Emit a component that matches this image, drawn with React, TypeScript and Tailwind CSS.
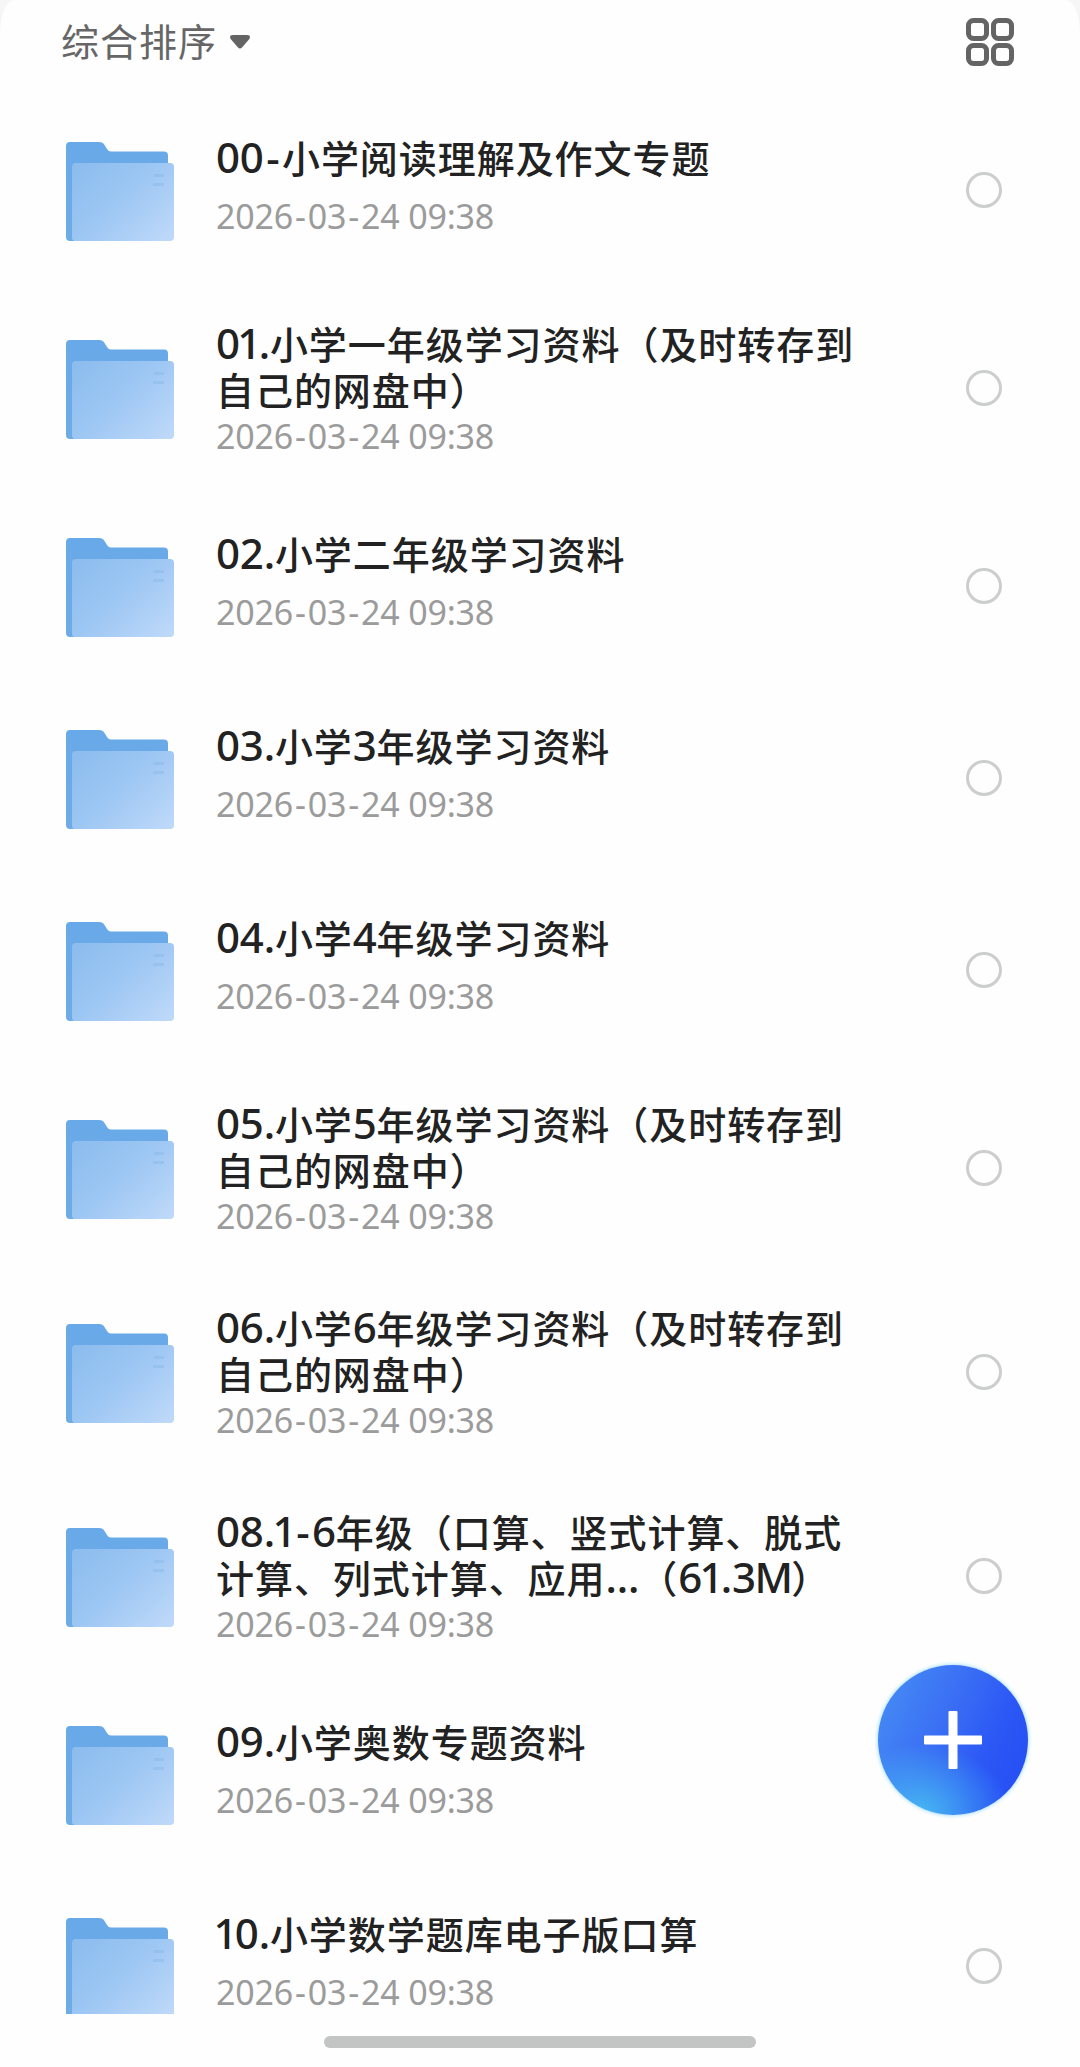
import clsx from 'clsx'

type FileItem = {
  lines: string[],
  date: string
}

const files: FileItem[] = [
  { lines: ['00-小学阅读理解及作文专题'], date: '2026-03-24 09:38' },
  { lines: ['01.小学一年级学习资料（及时转存到', '自己的网盘中）'], date: '2026-03-24 09:38' },
  { lines: ['02.小学二年级学习资料'], date: '2026-03-24 09:38' },
  { lines: ['03.小学3年级学习资料'], date: '2026-03-24 09:38' },
  { lines: ['04.小学4年级学习资料'], date: '2026-03-24 09:38' },
  { lines: ['05.小学5年级学习资料（及时转存到', '自己的网盘中）'], date: '2026-03-24 09:38' },
  { lines: ['06.小学6年级学习资料（及时转存到', '自己的网盘中）'], date: '2026-03-24 09:38' },
  { lines: ['08.1-6年级（口算、竖式计算、脱式', '计算、列式计算、应用...（61.3M）'], date: '2026-03-24 09:38' },
  { lines: ['09.小学奥数专题资料'], date: '2026-03-24 09:38' },
  { lines: ['10.小学数学题库电子版口算'], date: '2026-03-24 09:38' },
]

const FolderIcon = () => (
  <svg viewBox="0 0 108 100" className="mt-1 h-[100px] w-[108px] shrink-0">
    <defs>
      <linearGradient id="front" x1="0" y1="0.1" x2="1" y2="0.9">
        <stop offset="0" stopColor="#8cbdee" />
        <stop offset="0.45" stopColor="#9cc6f3" />
        <stop offset="1" stopColor="#bdd8f9" />
      </linearGradient>
      <linearGradient id="back" x1="0" y1="0" x2="0" y2="1">
        <stop offset="0" stopColor="#68a9e9" />
        <stop offset="1" stopColor="#6fabe4" />
      </linearGradient>
    </defs>
    <path d="M4 0H33Q37 0 38.500 3L41 7Q42.500 9.500 45 9.500H98Q102 9.500 102 13.500V60L8 99H4Q0 99 0 95V4Q0 0 4 0Z" fill="url(#back)" />
    <path d="M10 21H104Q108 21 108 25V95Q108 99 104 99H9Q6 99 6 95V25Q6 21 10 21Z" fill="url(#front)" />
    <path d="M88 33.500H98M87 42.500H98" stroke="#84b4e6" strokeOpacity="0.4" strokeWidth="3" />
  </svg>
)

const GridIcon = () => (
  <svg viewBox="0 0 48 48" className="size-12" fill="none" stroke="#646464" strokeWidth="5">
    <rect x="2.500" y="2.500" width="18" height="18" rx="5" />
    <rect x="27.500" y="2.500" width="18" height="18" rx="5" />
    <rect x="2.500" y="27.500" width="18" height="18" rx="5" />
    <rect x="27.500" y="27.500" width="18" height="18" rx="5" />
  </svg>
)

// extra room round the hyphens, less round 1 and M
const spacing: Record<string, string> = {
  '-': 'mx-[2.5px]',
  '1': '-mx-[2.5px]',
  'M': '-mx-[1.5px]',
}

// digits and punctuation are set slightly larger than the Chinese glyphs
const TitleLine = ({ text }: { text: string }) => (
  <p className="h-[46px] whitespace-nowrap text-[38px] leading-[46px] tracking-[0.95px]">
    {text.split(/([0-9A-Z.-]+)/).filter(Boolean).map((part, i) => (
      /^[0-9A-Z.-]/.test(part) ? (
        <span key={i} className="font-['Noto_Sans'] text-[42px] leading-none tracking-[-0.2px]">
          {part.split(/([-1M])/).filter(Boolean).map((piece, j) => (
            <span key={j} className={spacing[piece]}>{piece}</span>
          ))}
        </span>
      ) : part
    ))}
  </p>
)

const DateLine = ({ date }: { date: string }) => (
  <p className="h-[46px] whitespace-nowrap font-['Noto_Sans'] text-[34px] leading-[46px] tracking-[-0.2px] text-[#9b9b9b]">
    {date.split(/(-)/).map((part, i) => (
      <span key={i} className={clsx(part === '-' && 'mx-[2px]')}>{part}</span>
    ))}
  </p>
)

const FileRow = ({ lines, date }: FileItem) => {
  const single = lines.length === 1
  return (
    <li className={clsx('flex shrink-0 items-center pl-[66px] pr-[78px]', single ? 'h-48' : 'h-[204px]')}>
      <FolderIcon />
      <div className={clsx('ml-[42px] flex flex-1 flex-col', single ? 'gap-[13px] pb-2' : 'gap-px pt-[3px]')}>
        <div className="font-medium text-[#222]">
          {lines.map((line) => <TitleLine key={line} text={line} />)}
        </div>
        <DateLine date={date} />
      </div>
      <div className="size-9 rounded-full border-[3px] border-[#cbcecd]"></div>
    </li>
  )
}

const App = () => {
  return (
    <div className="relative h-[2067px] w-[1080px] overflow-hidden bg-[#f6f6f6] font-['Noto_Sans_CJK_SC',sans-serif]">
      <div className="flex h-full flex-col bg-[#fefefe] [border-radius:14px_14px_0_0/34px_34px_0_0]">
        <header className="flex h-[94px] shrink-0 items-start justify-between pl-[61px] pr-[66px] pt-[18px]">
          <div className="flex h-12 items-center gap-[13px] text-[38px] tracking-[1px] text-[#666]">
            <span className="pb-[5px]">综合排序</span>
            <svg viewBox="0 0 20 14" className="h-3.5 w-5" fill="#646464">
              <path d="M3 0H17Q20 0 20 2Q20 3.500 18.500 5L12 12.500Q10 14.500 8 12.500L1.500 5Q0 3.500 0 2Q0 0 3 0Z" />
            </svg>
          </div>
          <GridIcon />
        </header>
        <ul className="flex h-[1920px] shrink-0 flex-col overflow-hidden">
          {files.map((file) => <FileRow key={file.lines[0]} {...file} />)}
        </ul>
        <div className="mx-auto mt-[22px] h-3 w-[432px] shrink-0 rounded-full bg-[#c3c5c4]"></div>
      </div>
      <button className="absolute left-[878px] top-[1665px] flex size-[150px] items-center justify-center rounded-full bg-[radial-gradient(ellipse_60%_45%_at_28%_98%,#46b6f2_0%,#46b6f280_50%,#46b6f200_100%),linear-gradient(115deg,#4488f5_10%,#3b70f4_40%,#2c58f5_68%,#264ff4_90%)] shadow-[0_0_4px_#7fd4f8]">
        <svg viewBox="0 0 58 58" className="size-[58px]" fill="#fff">
          <rect x="24.500" y="0" width="9" height="58" rx="1" />
          <rect x="0" y="24.500" width="58" height="9" rx="1" />
        </svg>
      </button>
    </div>
  )
}

export default App
